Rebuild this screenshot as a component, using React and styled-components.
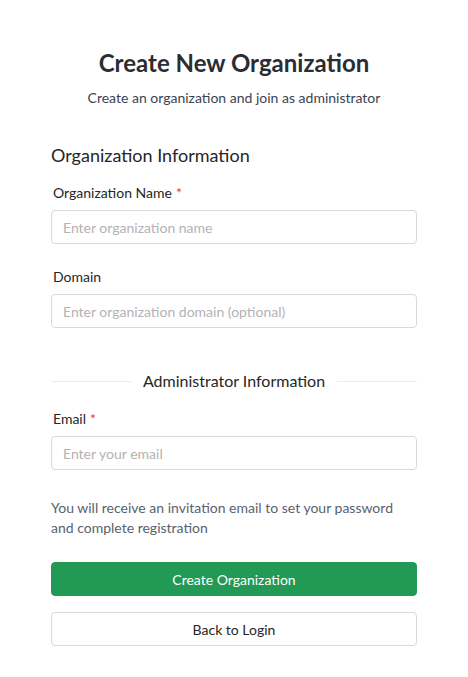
import React from "react";
import styled, { createGlobalStyle } from "styled-components";

const GlobalStyle = createGlobalStyle`
  body {
    margin: 0;
    background: #fff;
    font-family: Lato, "Open Sans", sans-serif;
    color: #262626;
  }
  * { box-sizing: border-box; }
`;

const Page = styled.div`
  width: 366px;
  margin: 0 auto;
  padding-top: 47px;
  display: flex;
  flex-direction: column;
`;

const Title = styled.h1`
  margin: 0;
  font-size: 24px;
  line-height: 32px;
  font-weight: 700;
  text-align: center;
  color: #2b2d33;
`;

const Subtitle = styled.p`
  margin: 9px 0 0;
  font-size: 14px;
  line-height: 20px;
  text-align: center;
  color: #3a4352;
`;

const SectionTitle = styled.h2`
  margin: 35px 0 0;
  font-size: 18px;
  line-height: 24px;
  font-weight: 400;
  color: #262626;
`;

const Field = styled.div`
  display: flex;
  flex-direction: column;
  gap: 7px;
  margin-top: ${(p) => p.$top}px;
`;

const Label = styled.label`
  height: 20px;
  padding-left: 2px;
  font-size: 14px;
  line-height: 20px;
  color: #262626;
`;

const Required = styled.span`
  color: #e5364b;
  margin-left: 4px;
  font-size: 14px;
  line-height: 1;
`;

const Input = styled.input`
  height: 34px;
  width: 100%;
  padding: 0 11px;
  border: 1px solid #d9d9d9;
  border-radius: 4px;
  font-family: inherit;
  font-size: 14px;
  color: #262626;
  outline: none;
  &::placeholder {
    color: #b3b3b3;
  }
`;

const Divider = styled.div`
  display: flex;
  align-items: center;
  gap: 12px;
  margin-top: 42px;
  font-size: 16px;
  line-height: 22px;
  color: #262626;
  &::before,
  &::after {
    content: "";
    flex: 1;
    height: 1px;
    background: #ececec;
  }
`;

const Hint = styled.p`
  margin: 28px 0 0;
  font-size: 14px;
  line-height: 20px;
  color: #59626f;
`;

const Button = styled.button`
  height: 34px;
  width: 100%;
  margin-top: ${(p) => p.$top}px;
  border-radius: 4px;
  font-family: inherit;
  font-size: 14px;
  cursor: pointer;
  border: 1px solid ${(p) => (p.$primary ? "#229954" : "#d9d9d9")};
  background: ${(p) => (p.$primary ? "#229954" : "#fff")};
  color: ${(p) => (p.$primary ? "#fff" : "#262626")};
`;

const App = () => {
  return (
    <>
      <GlobalStyle />
      <Page>
        <Title>Create New Organization</Title>
        <Subtitle>Create an organization and join as administrator</Subtitle>

        <SectionTitle>Organization Information</SectionTitle>
        <Field $top={16}>
          <Label>Organization Name<Required>*</Required></Label>
          <Input placeholder="Enter organization name" />
        </Field>
        <Field $top={23}>
          <Label>Domain</Label>
          <Input placeholder="Enter organization domain (optional)" />
        </Field>

        <Divider>Administrator Information</Divider>
        <Field $top={17}>
          <Label>Email<Required>*</Required></Label>
          <Input placeholder="Enter your email" />
        </Field>

        <Hint>You will receive an invitation email to set your password and complete registration</Hint>

        <Button $primary $top={24}>Create Organization</Button>
        <Button $top={16}>Back to Login</Button>
      </Page>
    </>
  );
};

export default App;
